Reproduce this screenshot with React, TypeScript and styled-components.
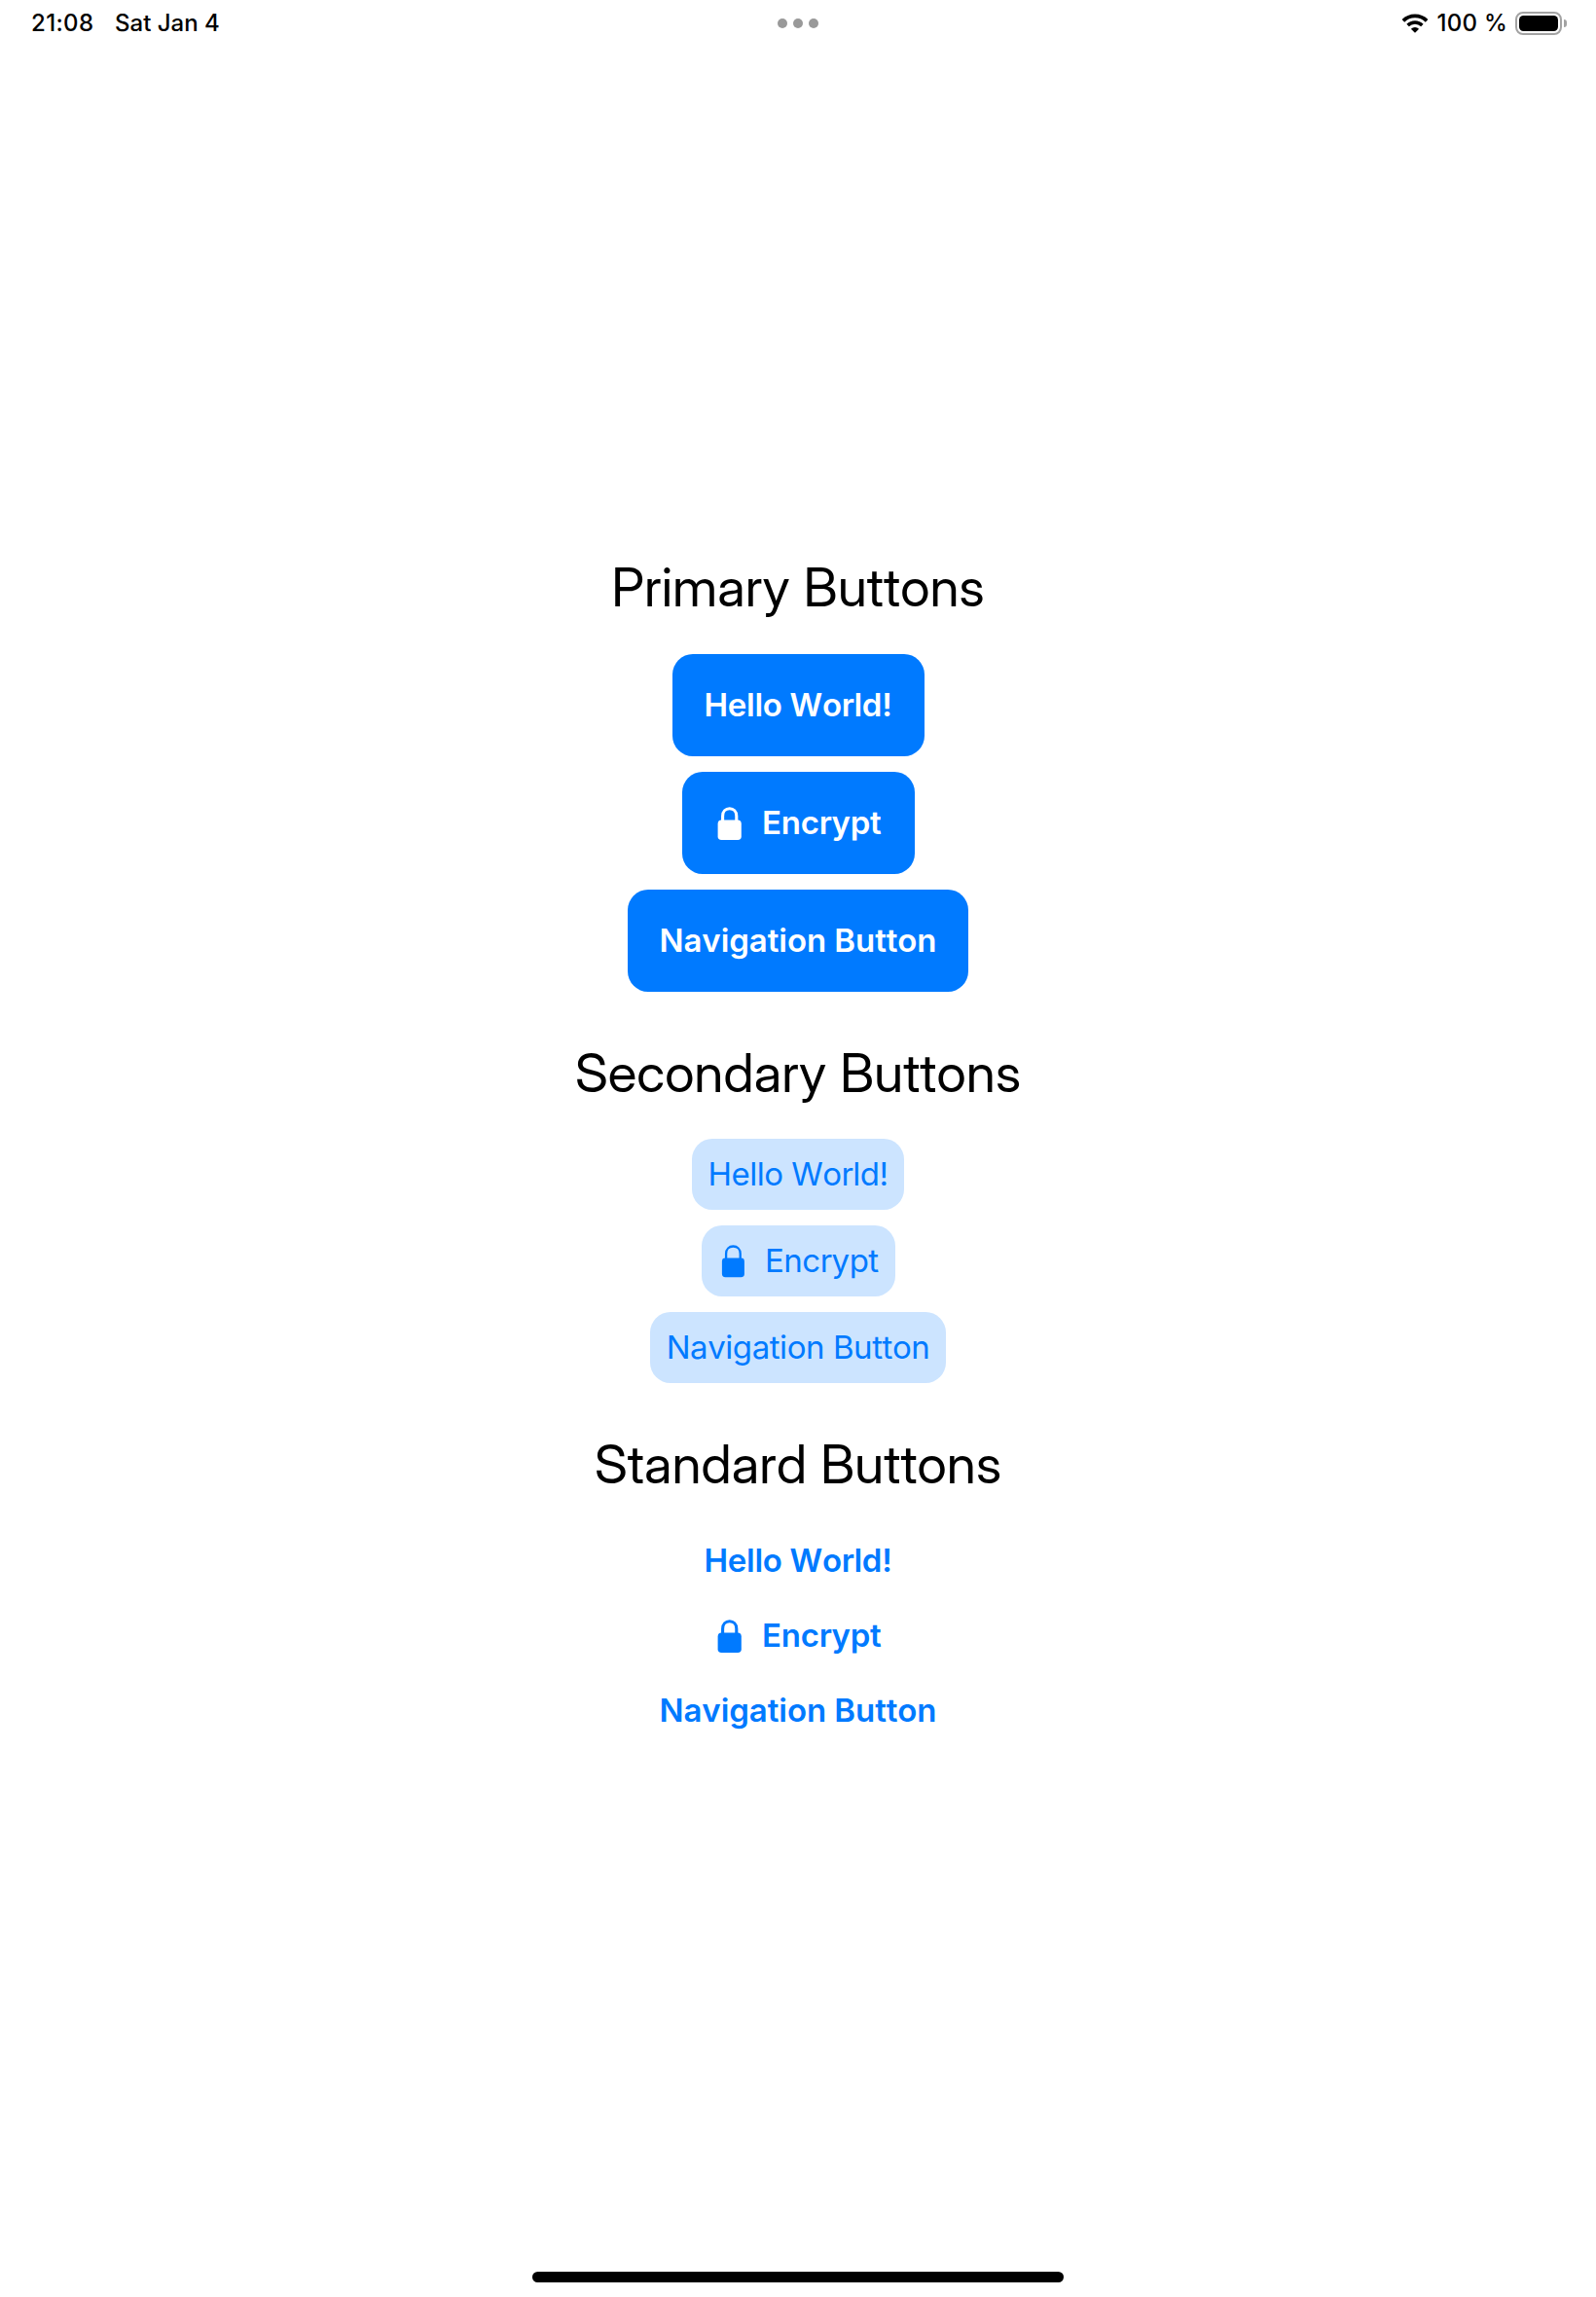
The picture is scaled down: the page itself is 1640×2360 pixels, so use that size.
import React from 'react';
import styled, { createGlobalStyle, css } from 'styled-components';

const GlobalStyle = createGlobalStyle`
  * { box-sizing: border-box; }
  body { margin: 0; background: #fff; }
`;

const Screen = styled.div`
  display: flex;
  flex-direction: column;
  width: 1640px;
  height: 2360px;
  background: #fff;
  color: #000;
  font-family: Inter, "Liberation Sans", sans-serif;
`;

const StatusBar = styled.header`
  display: grid;
  grid-template-columns: 1fr auto 1fr;
  align-items: center;
  height: 48px;
  padding: 0 30px 0 32px;
  font-size: 24px;
  font-weight: 500;
  line-height: 30px;
  white-space: pre;
`;

const StatusGroup = styled.div<{ $end?: boolean }>`
  display: flex;
  align-items: center;
  justify-content: ${(p) => (p.$end ? 'flex-end' : 'flex-start')};
`;

const Clock = styled.span`
  width: 86px;
  letter-spacing: 0.35px;
`;

const DateLabel = styled.span`
  letter-spacing: 0;
`;

const Percent = styled.span`
  margin: 0 8px 0 9px;
  letter-spacing: 0.25px;
`;

const Multitasking = styled.div`
  display: flex;
  gap: 6px;
  margin-right: 2px;
`;

const Dot = styled.i`
  width: 10px;
  height: 10px;
  border-radius: 50%;
  background: #999;
`;

const BatteryShell = styled.div`
  width: 48px;
  height: 24px;
  padding: 2px;
  border: 2px solid #a3a3a3;
  border-radius: 8px;
`;

const BatteryLevel = styled.div`
  height: 100%;
  border-radius: 4.5px;
  background: #000;
`;

const BatteryCap = styled.div`
  width: 3px;
  height: 8px;
  margin-left: 2px;
  border-radius: 0 4px 4px 0;
  background: #a3a3a3;
`;

const Content = styled.main`
  display: flex;
  flex: 1;
  flex-direction: column;
  gap: 50px;
  padding-top: 522px;
`;

const Title = styled.h2`
  margin: 0 0 19px;
  font-family: "Inter Display", Inter, sans-serif;
  font-size: 55px;
  font-weight: 400;
  line-height: 67px;
  letter-spacing: 0.05px;
  font-kerning: none;
  white-space: nowrap;
`;

const Section = styled.section<{ $variant: Variant }>`
  display: flex;
  flex-direction: column;
  align-items: center;
  gap: 16px;

  ${Title} {
    margin-bottom: ${(p) => (p.$variant === 'secondary' ? 18 : 19)}px;
  }
`;

type Variant = 'primary' | 'secondary' | 'standard';

const variants = {
  primary: css`
    padding: 32px;
    background: #007aff;
    color: #fff;
    font-weight: 600;
  `,
  secondary: css`
    padding: 16px;
    background: #cce4ff;
    color: #007aff;
    font-weight: 400;
  `,
  standard: css`
    padding: 10px 0;
    background: none;
    color: #007aff;
    font-weight: 600;
  `,
};

const ActionButton = styled.button<{ $variant: Variant; $width: number; $tracking: number }>`
  display: flex;
  align-items: center;
  justify-content: center;
  gap: 16px;
  width: ${(p) => p.$width}px;
  border: 0;
  border-radius: 21px;
  font-family: inherit;
  font-size: 33px;
  font-kerning: none;
  line-height: 41px;
  letter-spacing: ${(p) => p.$tracking}px;
  white-space: nowrap;
  ${(p) => variants[p.$variant]}

  &:has(svg) {
    justify-content: flex-start;
    margin-left: 1px;
  }
`;

const LockIcon = styled.svg`
  flex: none;
  height: 41px;
`;

const HomeArea = styled.footer`
  display: flex;
  justify-content: center;
  padding-bottom: 15px;
`;

const HomeIndicator = styled.div`
  width: 546px;
  height: 11px;
  border-radius: 6px;
  background: #000;
`;

function Lock({ bold }: { bold: boolean }) {
  return bold ? (
    <LockIcon width="34" viewBox="0 0 34 41" fill="none">
      <path
        d="M9.6 19v-5.6c0-4.7 3.1-7.6 7.1-7.6s7.1 2.9 7.1 7.6V19"
        stroke="currentColor"
        strokeWidth="3.1"
      />
      <rect x="4.6" y="17.6" width="24.2" height="20.5" rx="3.8" fill="currentColor" />
    </LockIcon>
  ) : (
    <LockIcon width="33" viewBox="0 0 33 41" fill="none">
      <path
        d="M9.1 19v-6c0-4.7 3.2-7.5 7.3-7.5s7.3 2.8 7.3 7.5v6"
        stroke="currentColor"
        strokeWidth="2.3"
      />
      <rect x="4.9" y="17.6" width="23" height="19.6" rx="3.4" fill="currentColor" />
    </LockIcon>
  );
}

function WifiIcon() {
  return (
    <svg width="28" height="20" viewBox="0 0 28 20" fill="none">
      <path d="M1.9 7.4a17.2 17.2 0 0 1 24.2 0" stroke="#000" strokeWidth="3.7" />
      <path d="M6.6 12.1a10.5 10.5 0 0 1 14.8 0" stroke="#000" strokeWidth="3.5" />
      <path d="M14 19.8 9.9 15.7a5.8 5.8 0 0 1 8.2 0Z" fill="#000" />
    </svg>
  );
}

interface Action {
  label: string;
  width: number;
  tracking: number;
  lock?: boolean;
}

const sections: { title: string; variant: Variant; actions: Action[] }[] = [
  {
    title: 'Primary Buttons',
    variant: 'primary',
    actions: [
      { label: 'Hello World!', width: 259, tracking: -0.3 },
      { label: 'Encrypt', width: 239, tracking: -0.25, lock: true },
      { label: 'Navigation Button', width: 350, tracking: -0.06 },
    ],
  },
  {
    title: 'Secondary Buttons',
    variant: 'secondary',
    actions: [
      { label: 'Hello World!', width: 218, tracking: -0.52 },
      { label: 'Encrypt', width: 199, tracking: -0.5, lock: true },
      { label: 'Navigation Button', width: 304, tracking: -0.43 },
    ],
  },
  {
    title: 'Standard Buttons',
    variant: 'standard',
    actions: [
      { label: 'Hello World!', width: 195, tracking: -0.3 },
      { label: 'Encrypt', width: 175, tracking: -0.25, lock: true },
      { label: 'Navigation Button', width: 286, tracking: -0.06 },
    ],
  },
];

export default function App() {
  return (
    <Screen>
      <GlobalStyle />
      <StatusBar>
        <StatusGroup>
          <Clock>21:08</Clock>
          <DateLabel>Sat Jan 4</DateLabel>
        </StatusGroup>
        <Multitasking>
          <Dot />
          <Dot />
          <Dot />
        </Multitasking>
        <StatusGroup $end>
          <WifiIcon />
          <Percent>100 %</Percent>
          <BatteryShell>
            <BatteryLevel />
          </BatteryShell>
          <BatteryCap />
        </StatusGroup>
      </StatusBar>
      <Content>
        {sections.map(({ title, variant, actions }) => (
          <Section key={title} $variant={variant}>
            <Title>{title}</Title>
            {actions.map(({ label, width, tracking, lock }) => (
              <ActionButton key={label} $variant={variant} $width={width} $tracking={tracking}>
                {lock && <Lock bold={variant !== 'secondary'} />}
                <span>{label}</span>
              </ActionButton>
            ))}
          </Section>
        ))}
      </Content>
      <HomeArea>
        <HomeIndicator />
      </HomeArea>
    </Screen>
  );
}
